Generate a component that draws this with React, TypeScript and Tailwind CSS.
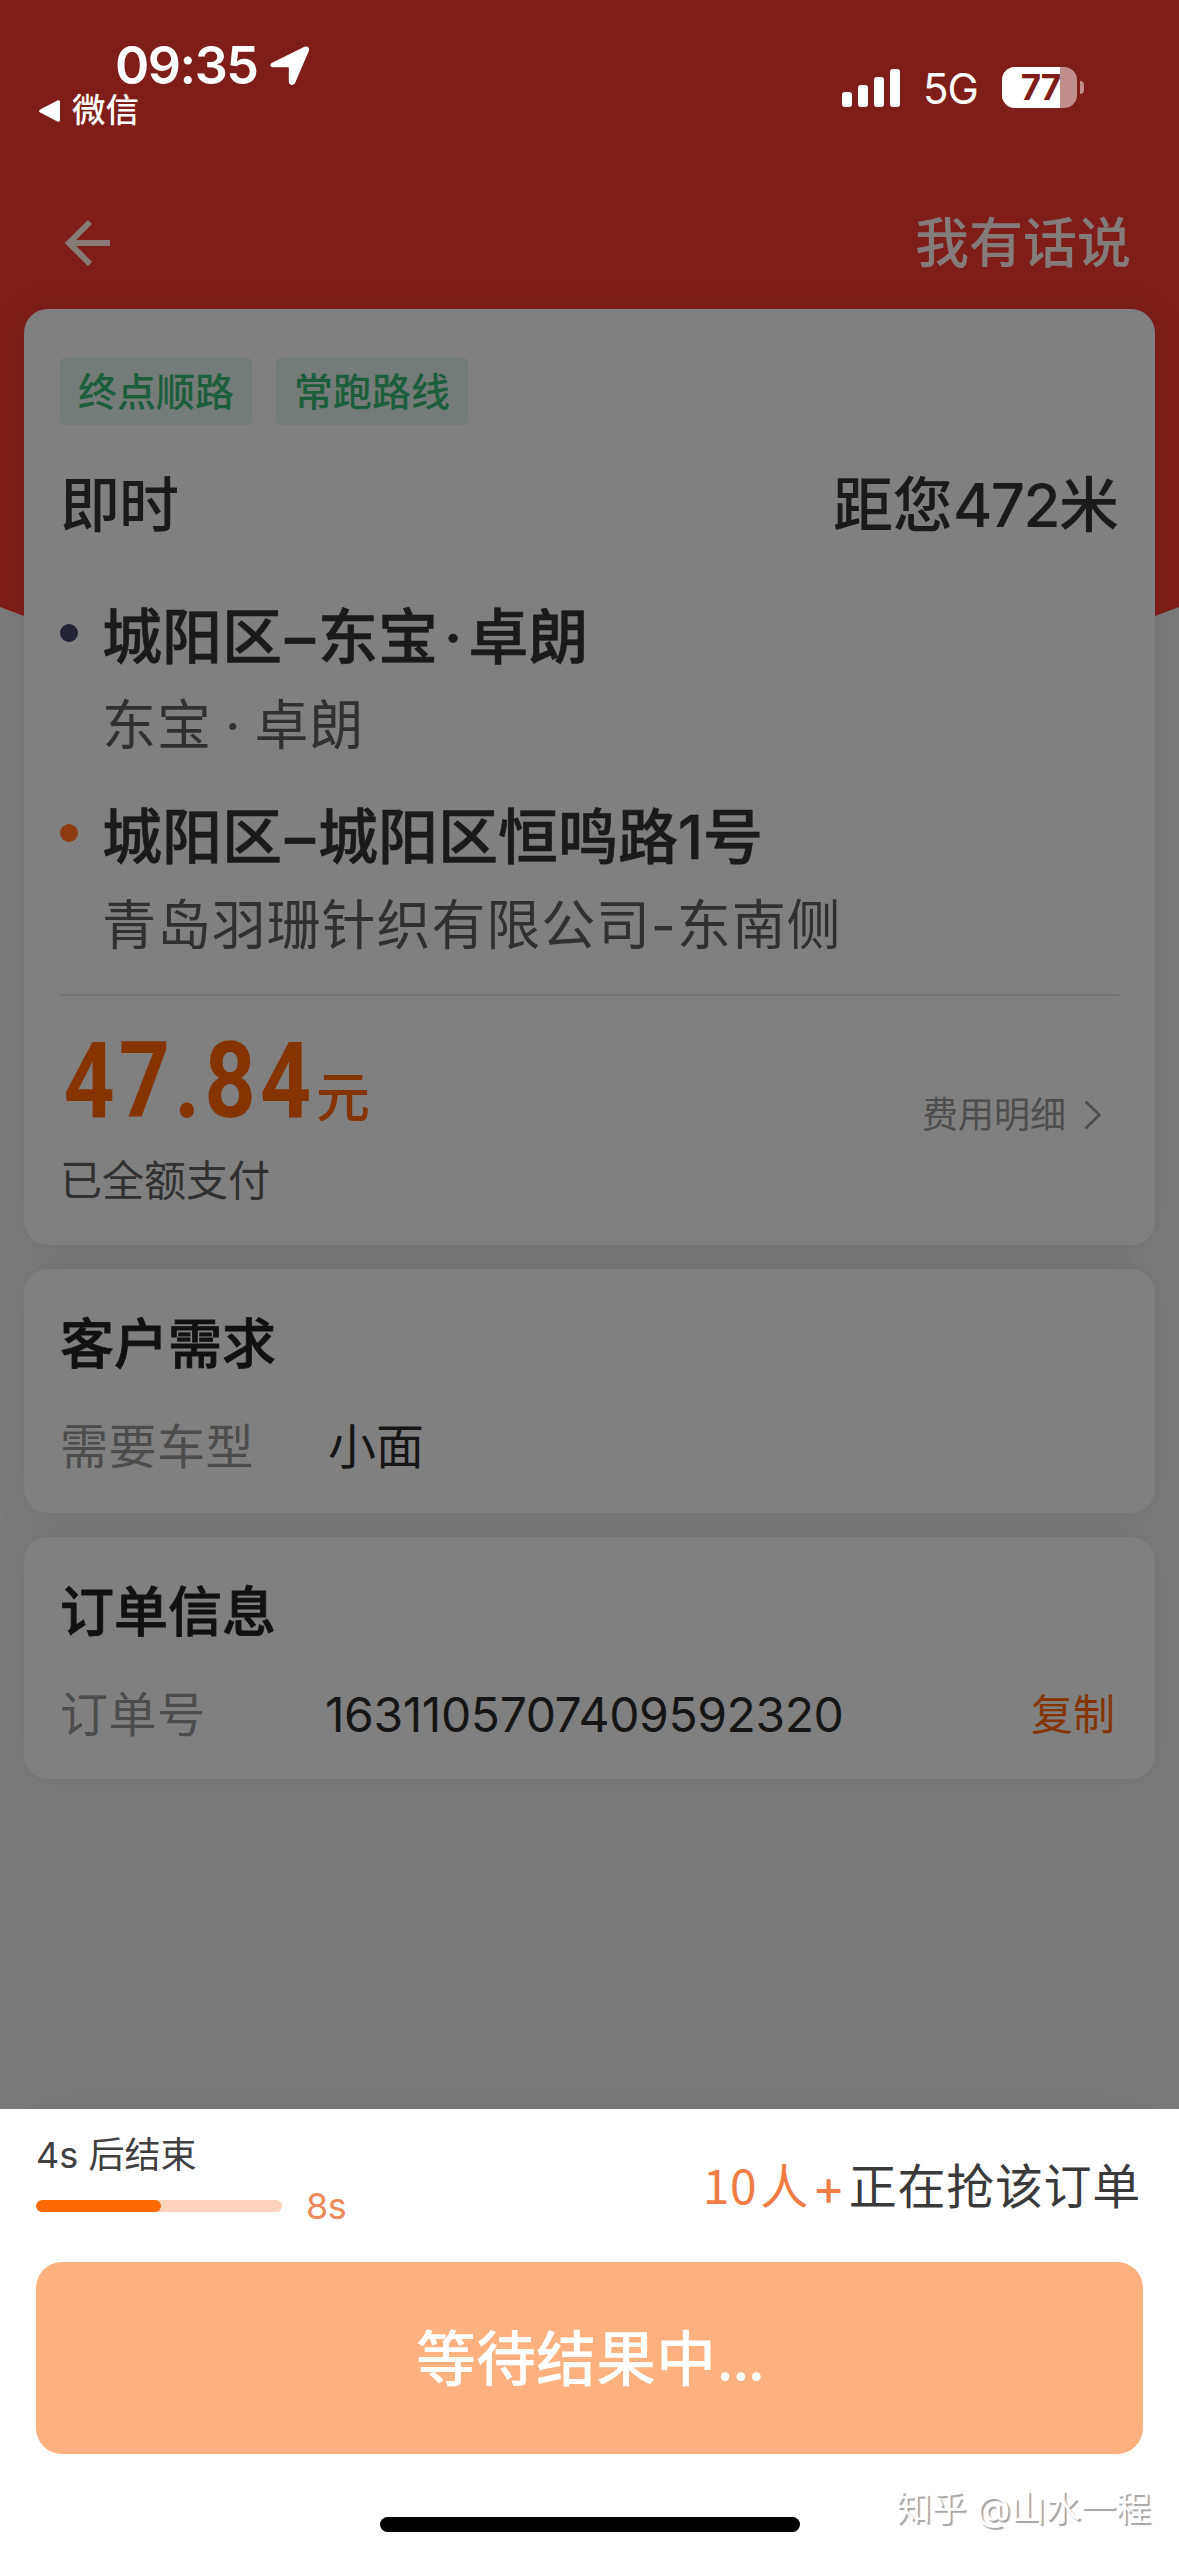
import type { ReactNode } from "react";

interface Stop {
  area: string;
  name: ReactNode;
  detail: string;
  dot: string;
}

const stops: Stop[] = [
  {
    area: "城阳区",
    name: (
      <>
        东宝<span className="mx-[6px]">·</span>卓朗
      </>
    ),
    detail: "东宝 · 卓朗",
    dot: "bg-[#232336]",
  },
  {
    area: "城阳区",
    name: "城阳区恒鸣路1号",
    detail: "青岛羽珊针织有限公司-东南侧",
    dot: "bg-[#8c3c10]",
  },
];

const tags = ["终点顺路", "常跑路线"];

const elapsed = 125;
const total = 246;

function SignalIcon() {
  return (
    <svg width="58" height="38" viewBox="0 0 58 38" fill="#fff">
      <rect x="0" y="23" width="10" height="15" rx="3" />
      <rect x="16" y="16" width="10" height="22" rx="3" />
      <rect x="32" y="8" width="10" height="30" rx="3" />
      <rect x="48" y="0" width="10" height="38" rx="3" />
    </svg>
  );
}

function Battery({ level }: { level: number }) {
  return (
    <div className="flex items-center gap-[3px]">
      <div className="relative flex h-[41px] w-[75px] items-center justify-center overflow-hidden rounded-[13px] bg-[#c08e8b]">
        <div className="absolute inset-y-0 left-0 bg-white" style={{ width: `${level}%` }} />
        <span className="relative pl-[2px] text-[35px] leading-none font-bold tracking-[-1px] text-[#7f1d18]">
          {level}
        </span>
      </div>
      <div className="h-[13px] w-[4px] rounded-r-full bg-[#c08e8b]" />
    </div>
  );
}

function StatusBar() {
  return (
    <div className="flex h-[178px] justify-between text-white">
      <div className="pt-[41px]">
        <div className="flex h-[50px] items-center gap-[13px] pl-[115px]">
          <span className="text-[52px] leading-none font-semibold tracking-[-1.5px]">09:35</span>
          <svg width="40" height="40" viewBox="0 0 40 40" fill="#fff">
            <path d="M2.6 16.6 34.5.8c3-1.4 5.6 1 4.3 4.2L25.2 36.8c-1.3 3.2-6.4 2.8-6.4-1V22.2c0-.8-.3-1-1-1H3.8c-4 0-4.6-3-1.2-4.6Z" />
          </svg>
        </div>
        <div className="flex h-10 items-center gap-3 pl-[39px]">
          <svg width="21" height="22" viewBox="0 0 21 22" fill="#fff">
            <path d="M1.2 9.6 18.4.5C19.8-.2 21 .5 21 2v18c0 1.5-1.2 2.2-2.6 1.5L1.2 12.4C-.4 11.6-.4 10.4 1.2 9.6Z" />
          </svg>
          <span className="text-[33.5px] leading-none font-medium">微信</span>
        </div>
      </div>
      <div className="mt-[67px] flex h-[41px] items-center pr-[95px]">
        <SignalIcon />
        <span className="ml-[23px] w-[79px] pt-[2px] text-[42px] leading-none tracking-[-1px]">5G</span>
        <Battery level={77} />
      </div>
    </div>
  );
}

function NavBar() {
  return (
    <div className="flex h-[131px] items-center justify-between pr-12 pb-[1px] pl-[65px] text-[#877a77]">
      <svg width="46" height="46" viewBox="0 0 46 46" fill="none" stroke="currentColor" strokeWidth="6">
        <path d="M25 2 4 23l21 21M4 23h41" />
      </svg>
      <span className="pt-[2px] text-[54px] leading-none font-medium text-[#847c7b]">我有话说</span>
    </div>
  );
}

function Card({ className, children }: { className: string; children: ReactNode }) {
  return (
    <div
      className={`rounded-3xl bg-[#808080] px-9 shadow-[0_0_36px_rgba(0,0,0,0.09)] ${className}`}
    >
      {children}
    </div>
  );
}

function StopRow({ stop }: { stop: Stop }) {
  return (
    <div className="flex h-[170px] gap-6">
      <div className={`mt-[29px] size-[18px] shrink-0 rounded-full ${stop.dot}`} />
      <div className="whitespace-nowrap">
        <p className="h-[84px] text-[60px] leading-[84px] font-medium text-[#1a1a1a] [-webkit-text-stroke:0.6px_#1a1a1a]">
          {stop.area}
          <span className="mx-[3px]">–</span>
          {stop.name}
        </p>
        <p className="mt-[7px] h-[79px] text-[54px] leading-[80px] tracking-[0.9px] text-[#303030] [word-spacing:-3px]">
          {stop.detail}
        </p>
      </div>
    </div>
  );
}

function OrderCard() {
  return (
    <Card className="h-[936px] pt-12">
      <div className="flex gap-6">
        {tags.map((tag) => (
          <span
            key={tag}
            className="flex h-[68px] w-48 items-center justify-center rounded-md bg-[#747b78] text-[39px] leading-none font-medium text-[#1c5e3c]"
          >
            {tag}
          </span>
        ))}
      </div>

      <div className="mt-8 flex h-24 items-center justify-between text-[60px] leading-none font-medium text-[#1a1a1a]">
        <span className="tracking-[-1px]">即时</span>
        <span>
          距您<span className="tracking-[-1.5px]">472</span>米
        </span>
      </div>

      <div className="mt-[42px] flex flex-col gap-[30px]">
        {stops.map((stop) => (
          <StopRow key={stop.detail} stop={stop} />
        ))}
      </div>

      <div className="mt-[29px] h-[2px] bg-[#747474]" />

      <div className="flex justify-between">
        <div className="pt-9">
          <div className="flex h-[100px] items-baseline text-[#853400]">
            <span className="w-[256px] origin-left scale-x-[0.85] pl-1 font-[Roboto] text-[105px] leading-[100px] font-bold tracking-[5px]">
              47.84
            </span>
            <span className="text-[54px] leading-none font-medium">元</span>
          </div>
          <p className="mt-[19px] h-[60px] text-[42px] leading-[60px] text-[#303030]">已全额支付</p>
        </div>
        <div className="flex h-[149px] items-center gap-[18px] pt-[89px] pr-[18px] text-[#4d4d4d]">
          <span className="text-[36px] leading-none">费用明细</span>
          <svg width="17" height="30" viewBox="0 0 17 30" fill="none" stroke="currentColor" strokeWidth="2.5">
            <path d="m1.500 1.500 14 13.500-14 13.500" />
          </svg>
        </div>
      </div>
    </Card>
  );
}

interface InfoCardProps {
  className: string;
  title: string;
  label: string;
  children: ReactNode;
}

function InfoCard({ className, title, label, children }: InfoCardProps) {
  return (
    <Card className={`pt-9 ${className}`}>
      <h2 className="h-20 text-[54px] leading-[80px] font-medium text-[#111] [-webkit-text-stroke:0.8px_#111]">
        {title}
      </h2>
      <div className="mt-8 flex h-[60px] items-center text-[48px] leading-[60px] text-[#151515]">
        <span className="w-[265px] tracking-[0.5px] text-[#4c4c4c]">{label}</span>
        {children}
      </div>
    </Card>
  );
}

function GrabPanel() {
  return (
    <div className="relative mt-auto flex h-[447px] flex-col bg-white px-9 shadow-[0_0_90px_rgba(0,0,0,0.08)]">
      <div className="flex h-[153px] justify-between">
        <div className="pt-[26px]">
          <p className="h-10 text-[36px] leading-10 text-[#404040]">4s 后结束</p>
          <div className="mt-[11px] flex h-10 items-center gap-6">
            <div className="h-3 w-[246px] overflow-hidden rounded-full bg-[#ffd2bd]">
              <div
                className="h-full rounded-full bg-[#ff6900]"
                style={{ width: `${(elapsed / total) * 100}%` }}
              />
            </div>
            <span className="text-[36px] leading-none tracking-[-0.5px] text-[#ec8a5c]">8s</span>
          </div>
        </div>
        <p className="flex h-[156px] items-center pr-[2px] text-[48px] leading-none tracking-[0.7px] text-[#3a3a3a]">
          <span className="pb-[8px] font-['Noto_Sans_CJK_SC'] text-[#ef7d45]">10</span>
          <span className="ml-[3px] text-[#ef7d45]">人</span>
          <span className="mr-[3px] ml-[3px] text-[50px] text-[#ef7d45]">+</span>
          正在抢该订单
        </p>
      </div>

      <button className="h-48 w-full rounded-[26px] bg-[#fdb17f] pt-[2px] text-[60px] leading-none font-medium text-white">
        等待结果中<span className="tracking-[-2.5px]">...</span>
      </button>

      <div className="mx-auto mt-[63px] h-[15px] w-[420px] rounded-full bg-black" />

      <span className="absolute right-[28px] bottom-[28px] text-[35.2px] leading-10 text-white [text-shadow:2px_2px_1px_#a4a4a4]">
        知乎 @山水一程
      </span>
    </div>
  );
}

export default function App() {
  return (
    <div className="grid h-[2556px] w-[1179px] overflow-hidden bg-[#7b7b7b] font-['Inter','Noto_Sans_CJK_SC',sans-serif]">
      <div className="col-start-1 row-start-1 h-[700px] bg-[#7f1d18] [clip-path:polygon(0_0,100%_0,100%_607px,1155px_616px,50%_700px,24px_616px,0_607px)]" />
      <div className="z-10 col-start-1 row-start-1 flex h-[2556px] flex-col">
        <StatusBar />
        <NavBar />
        <div className="flex flex-col gap-6 px-6">
          <OrderCard />
          <InfoCard className="h-[244px]" title="客户需求" label="需要车型">
            <span className="pl-[3px]">小面</span>
          </InfoCard>
          <InfoCard className="h-[242px]" title="订单信息" label="订单号">
            <span className="tracking-[-0.4px]">1631105707409592320</span>
            <button className="ml-auto pr-1 text-[42px] text-[#853400]">复制</button>
          </InfoCard>
        </div>
        <GrabPanel />
      </div>
    </div>
  );
}
